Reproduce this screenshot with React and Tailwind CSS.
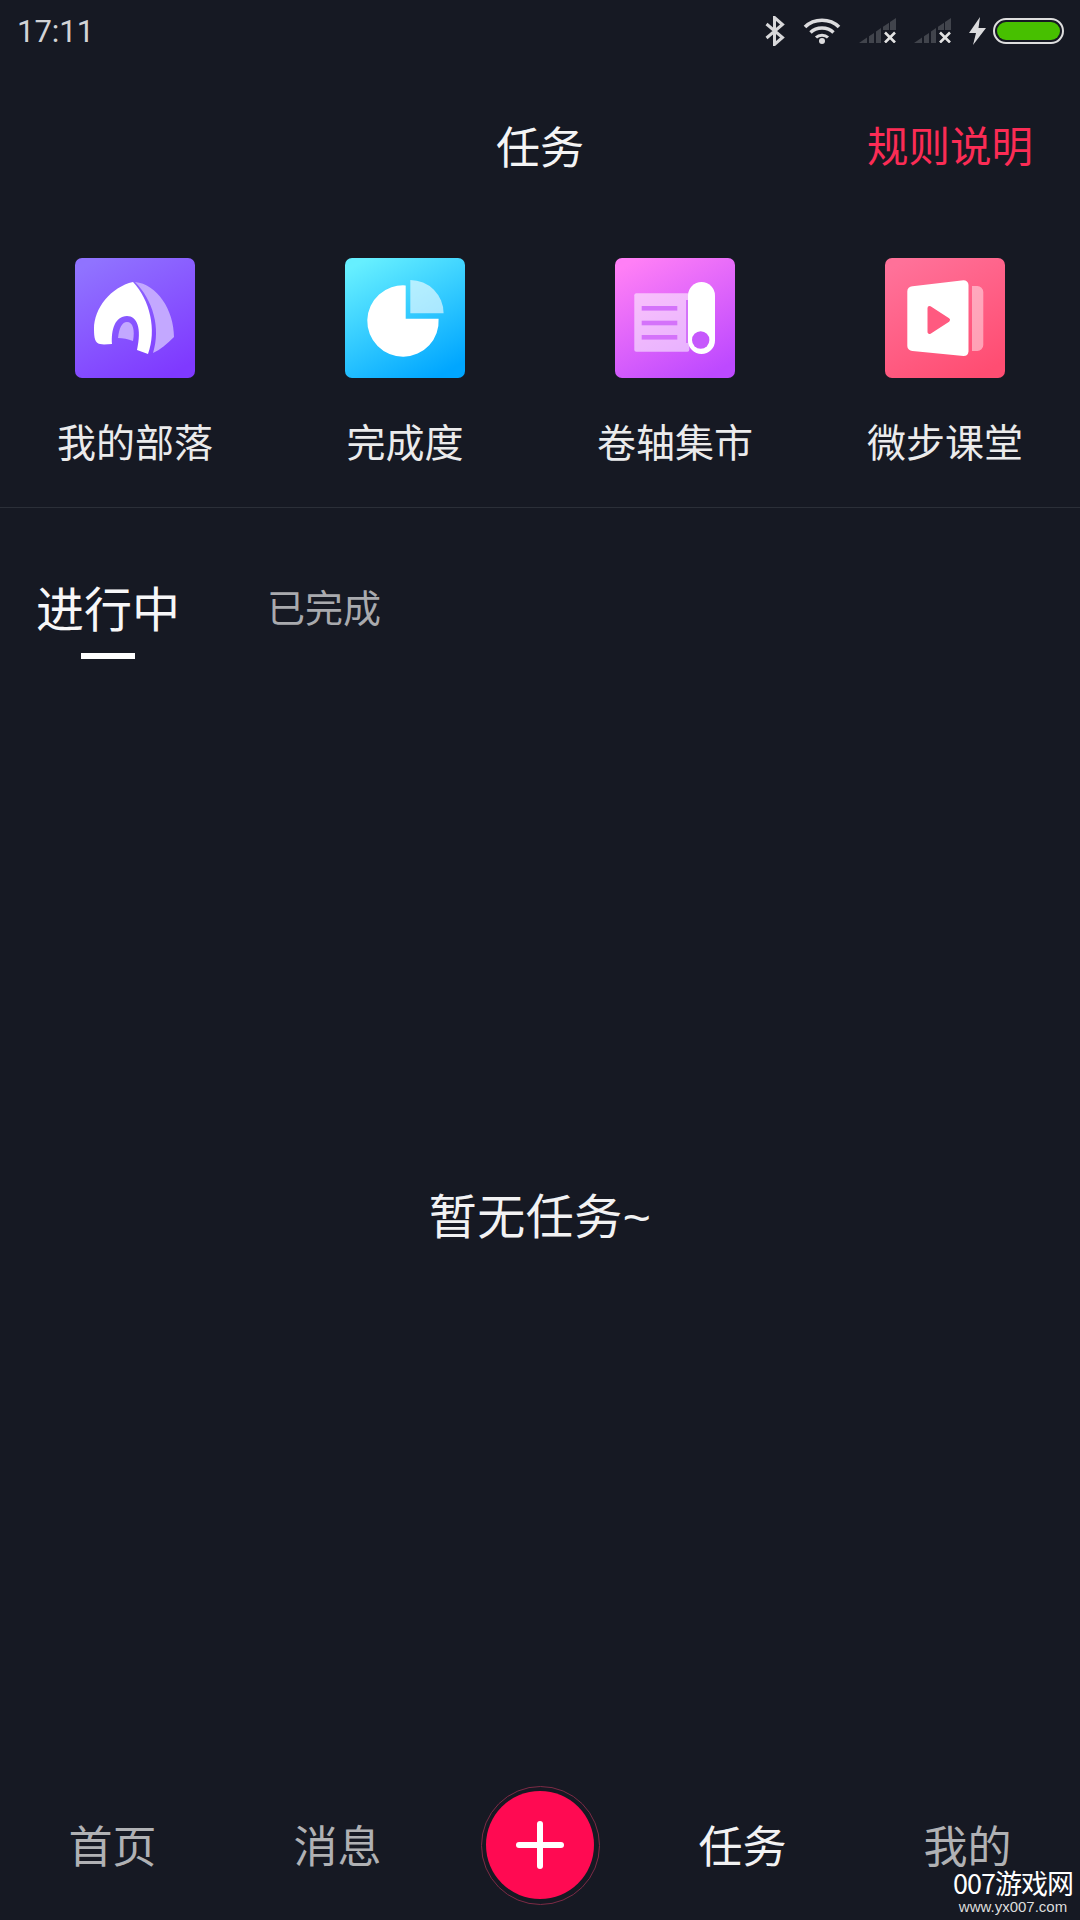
const FONT = "font-['Noto_Sans_CJK_SC','Noto_Sans',sans-serif]";

function Signal() {
  return (
    <svg width="37" height="25" viewBox="0 0 37 25" className="block">
      <path d="M0 25 L8 19.6 V25 Z M10 25 V18.2 L15 14.9 V25 Z M17 25 V13.5 L22 10.1 V25 Z M24 12 V8.8 L30 4.7 V12 Z M31 12 V4 L37 0 V12 Z" fill="#41444c" />
      <path d="M26 14.5 L36 24.5 M36 14.5 L26 24.5" stroke="#e2e2e2" strokeWidth="2.6" />
    </svg>
  );
}

function StatusBar() {
  return (
    <div className="flex h-[64px] items-center justify-between pl-[17px] pr-[16px]">
      <span className="pb-[1px] font-['Roboto','Liberation_Sans',sans-serif] text-[31px] leading-none font-normal text-[#d2d3d6]">17:11</span>
      <div className="flex items-center pb-[3px]">
        <svg width="20" height="30" viewBox="0 0 20 30" className="block">
          <path d="M1.5 8 L17.5 21.5 L9.5 28.5 V1.5 L17.5 8.5 L1.5 22" fill="none" stroke="#d8d8da" strokeWidth="3" />
        </svg>
        <svg width="38" height="27" viewBox="0 0 38 27" className="ml-[18px] block">
          <path d="M2 10 C11 1 27 1 36 10" fill="none" stroke="#dcdcde" strokeWidth="3.6" />
          <path d="M7.5 15.5 C13.5 9.5 24.5 9.5 30.5 15.5" fill="none" stroke="#dcdcde" strokeWidth="3.4" />
          <path d="M13 20.5 C16 17.5 22 17.5 25 20.5" fill="none" stroke="#dcdcde" strokeWidth="3" />
          <circle cx="19" cy="24" r="3" fill="#dcdcde" />
        </svg>
        <div className="ml-[18px]"><Signal /></div>
        <div className="ml-[18px]"><Signal /></div>
        <svg width="17" height="28" viewBox="0 0 17 28" className="ml-[18px] block">
          <path d="M11 0 L0 16 H7 L4 28 L17 11 H9.5 Z" fill="#dcdcde" />
        </svg>
        <div className="ml-[7px] flex h-[26px] w-[71px] rounded-full border-2 border-[#dedede] p-[2px]">
          <div className="h-full w-full rounded-full bg-[#47c000]" />
        </div>
      </div>
    </div>
  );
}

function TentIcon() {
  return (
    <svg width="120" height="120" viewBox="0 0 120 120" className="block rounded-[7px]">
      <defs>
        <linearGradient id="g1" x1="0.2" y1="0" x2="0.75" y2="1">
          <stop offset="0" stopColor="#9073ff" />
          <stop offset="1" stopColor="#7f39ff" />
        </linearGradient>
      </defs>
      <rect width="120" height="120" fill="url(#g1)" />
      <path d="M60 24 C82 26 99 52 99 79 C92 86 85 92 78 95 C86 70 78 42 60 24 Z" fill="#c3a8ff" />
      <path d="M58 24 C36 29 19 50 19 71 C19 80 20 85 25 86 C29 87 33 86 37 86 C36 72 40 58 52 58 C62 58 67 70 62 92 L73 96 C82 72 75 42 58 24 Z" fill="#fff" />
      <path d="M43 80 C44 70 47 64 52 64 C58 64 60 72 58 83 C53 81 48 80 43 80 Z" fill="#c3a8ff" />
    </svg>
  );
}

function PieIcon() {
  return (
    <svg width="120" height="120" viewBox="0 0 120 120" className="block rounded-[7px]">
      <defs>
        <linearGradient id="g2" x1="0.2" y1="0" x2="0.75" y2="1">
          <stop offset="0" stopColor="#66efff" />
          <stop offset="1" stopColor="#00a6ff" />
        </linearGradient>
      </defs>
      <rect width="120" height="120" fill="url(#g2)" />
      <path d="M60.7 27.4 V60.7 H93.6 A35.7 35.7 0 1 1 60.7 27.4 Z" fill="#fff" />
      <path d="M65.3 22 A33.3 33.3 0 0 1 98.6 55.3 H65.3 Z" fill="#fff" fillOpacity="0.6" />
    </svg>
  );
}

function ScrollIcon() {
  return (
    <svg width="120" height="120" viewBox="0 0 120 120" className="block rounded-[7px]">
      <defs>
        <linearGradient id="g3" x1="0.2" y1="0" x2="0.75" y2="1">
          <stop offset="0" stopColor="#ff7ff6" />
          <stop offset="1" stopColor="#bd49ff" />
        </linearGradient>
      </defs>
      <rect width="120" height="120" fill="url(#g3)" />
      <rect x="19.3" y="35.3" width="55" height="58.4" rx="2" fill="#fff" fillOpacity="0.55" />
      <rect x="26.7" y="48" width="35.6" height="4.6" fill="#d472fa" />
      <rect x="26.7" y="62.7" width="35.6" height="4.6" fill="#d472fa" />
      <rect x="26.7" y="77" width="35.6" height="4.6" fill="#d472fa" />
      <rect x="71" y="42" width="2" height="43" fill="#d472fa" />
      <rect x="73" y="24" width="27" height="72" rx="13.5" fill="#fff" />
      <circle cx="85.7" cy="82" r="8.7" fill="#c658fc" />
    </svg>
  );
}

function VideoIcon() {
  return (
    <svg width="120" height="120" viewBox="0 0 120 120" className="block rounded-[7px]">
      <defs>
        <linearGradient id="g4" x1="0.2" y1="0" x2="0.75" y2="1">
          <stop offset="0" stopColor="#ff7199" />
          <stop offset="1" stopColor="#ff4d72" />
        </linearGradient>
      </defs>
      <rect width="120" height="120" fill="url(#g4)" />
      <path d="M87 28 H92 A6 6 0 0 1 98.3 34 V87 A6 6 0 0 1 92 93 H87 Z" fill="#fff" fillOpacity="0.45" />
      <path d="M27.5 28.2 L78.5 22.2 A5 5 0 0 1 83.5 27 V93.5 A5 5 0 0 1 78.5 98 L27.5 93 A5 5 0 0 1 22.3 88 V33.5 A5 5 0 0 1 27.5 28.2 Z" fill="#fff" />
      <path d="M44.5 50 L63 62 L44.5 74 Z" fill="#ff5a80" stroke="#ff5a80" strokeWidth="4" strokeLinejoin="round" />
    </svg>
  );
}

function Shortcut({ icon, label }) {
  return (
    <div className="flex flex-col items-center">
      {icon}
      <span className="mt-[37px] mb-[2px] text-[39px] leading-[50px] text-[#ebebec]">{label}</span>
    </div>
  );
}

function NavItem({ label, active }) {
  return (
    <span className={active ? "pb-[3px] text-center text-[44px] leading-none text-[#f2f2f3]" : "pb-[3px] text-center text-[44px] leading-none text-[#b0b1b4]"}>
      {label}
    </span>
  );
}

export default function App() {
  return (
    <div className={`${FONT} relative flex h-[1920px] w-[1080px] flex-col overflow-hidden bg-[#161923] font-normal`}>
      <StatusBar />

      <div className="grid h-[164px] grid-cols-[1fr_auto_1fr] items-center">
        <div />
        <span className="pb-[2px] text-[44px] leading-none text-[#f4f4f5]">任务</span>
        <span className="justify-self-end pb-[2px] pr-[47px] text-[41.5px] leading-none text-[#fb2c55]">规则说明</span>
      </div>

      <div className="grid grid-cols-4 border-b border-[#2b2f38] pb-[40px] pt-[30px]">
        <Shortcut icon={<TentIcon />} label="我的部落" />
        <Shortcut icon={<PieIcon />} label="完成度" />
        <Shortcut icon={<ScrollIcon />} label="卷轴集市" />
        <Shortcut icon={<VideoIcon />} label="微步课堂" />
      </div>

      <div className="flex h-[160px] items-start pl-[36px] pt-[70px]">
        <div className="relative">
          <span className="block text-[48px] leading-[56px] text-[#f7f7f8]">进行中</span>
          <div className="absolute left-[45px] top-[75px] h-[6px] w-[54px] bg-white" />
        </div>
        <span className="ml-[87px] mt-[7px] text-[38px] leading-[42px] text-[#a9aaae]">已完成</span>
      </div>

      <div className="flex flex-1 items-center justify-center pb-[2px]">
        <span className="font-['Liberation_Sans','Noto_Sans_CJK_SC',sans-serif] text-[48px] leading-none tracking-[0.5px] text-[#f2f2f3]">暂无任务~</span>
      </div>

      <div className="grid h-[150px] grid-cols-[225px_225px_180px_225px_225px] items-center justify-items-center">
        <NavItem label="首页" />
        <NavItem label="消息" />
        <div className="flex h-[119px] w-[119px] items-center justify-center rounded-full border border-[#7c2a45]">
          <div className="relative h-[108px] w-[108px] rounded-full bg-[#ff0a52]">
            <div className="absolute left-[30px] top-[51px] h-[6px] w-[48px] rounded-full bg-white" />
            <div className="absolute left-[51px] top-[30px] h-[48px] w-[6px] rounded-full bg-white" />
          </div>
        </div>
        <NavItem label="任务" active />
        <NavItem label="我的" />
      </div>

      <div className="absolute left-[952px] top-[1870px] flex w-[122px] flex-col items-center text-white">
        <span className="text-[27px] leading-[26px] tracking-[-1px] whitespace-nowrap">007游戏网</span>
        <span className="mt-[3px] font-['Liberation_Sans',sans-serif] text-[15px] leading-[16px] text-[#dddddd] whitespace-nowrap">www.yx007.com</span>
      </div>
    </div>
  );
}
